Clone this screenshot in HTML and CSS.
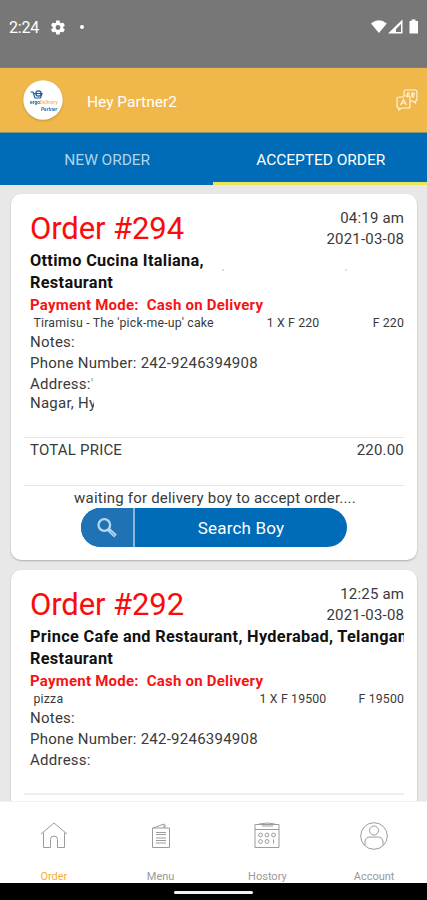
FILE: index.html
```html
<!DOCTYPE html>
<html lang="en">
<head>
<meta charset="utf-8">
<title>Accepted orders</title>
<link rel="stylesheet" href="styles.css">
</head>
<body>
<div class="phone">
  <div class="status">
    <span class="clock">2:24</span>
    <svg class="gear" viewBox="2 2 20 20"><path fill="#fff" fill-rule="evenodd" d="M19.4 13a7.600 7.600 0 0 0 0-2l2.100-1.600c.2-.2.3-.4.1-.7l-2-3.400c-.1-.2-.4-.3-.6-.2l-2.500 1a7.300 7.300 0 0 0-1.700-1l-.4-2.600c0-.3-.2-.5-.5-.5h-4c-.3 0-.5.200-.5.5L9 5.100a7.700 7.700 0 0 0-1.700 1l-2.500-1c-.2-.1-.5 0-.6.200l-2 3.400c-.1.300-.1.500.1.700L4.500 11a7.600 7.600 0 0 0 0 2l-2.200 1.600c-.2.200-.2.400-.1.700l2 3.400c.1.200.4.300.6.200l2.500-1c.5.400 1.100.8 1.700 1l.4 2.600c0 .3.200.5.500.5h4c.3 0 .5-.2.500-.5l.4-2.600c.6-.2 1.200-.6 1.700-1l2.500 1c.2.100.5 0 .6-.2l2-3.400c.2-.3.100-.5-.1-.7zM12 15.500a3.500 3.500 0 1 1 0-7 3.500 3.500 0 0 1 0 7z"/></svg>
    <i class="dot"></i>
    <svg class="signals" viewBox="0 0 50 16"><path fill="#fff" d="M1 4.500Q8.800-2 16.800 4.500L8.900 14z"/><path fill="#fff" fill-rule="evenodd" d="M32.500.5v14H18zM31 5l-5 5v3h5z"/><path fill="#fff" d="M39.500 2h2V.5h4V2h2.500v12.500h-8.500z"/></svg>
  </div>
  <header class="header">
    <svg class="avatar" viewBox="0 0 40 40"><circle cx="20" cy="20" r="19.700" fill="#fff"/><g fill="none" stroke="#1c5c9c" stroke-width="1.200"><path d="M7.500 12h2.500l2 6h5.500l1.500-4.500h-8"/><circle cx="15.500" cy="13.500" r="2.600"/></g><text x="7" y="23.500" class="logo-a">ergo</text><text x="16.500" y="23.500" class="logo-b">Delivery</text><text x="18" y="30.800" class="logo-c">Partner</text></svg>
    <span class="hello">Hey Partner2</span>
    <svg class="translate" viewBox="0 0 22 22" fill="none" stroke="#fff4dc" stroke-width="1.200"><path d="M8 7V2.800Q8 1 10 1h9q2 0 2 2v7.500q0 1.500-1.500 1.500v2L17 12h-3M8 7h4q2 0 2 2v8q0 2-2 2H5.500L3 21v-2q-2 0-2-2V9.500Q1 8 3 8h5"/><path d="M4.500 16l3-5.500 3 5.500M5.500 14h4M11.500 8.500V4H14m-2.500 2H14m2 2.500V4h2v2h-2l2 2.500"/></svg>
  </header>
  <nav class="tabs"><div class="tab">NEW ORDER</div><div class="tab on">ACCEPTED ORDER</div></nav>
  <main class="list">
    <article class="card">
      <div class="top"><h2>Order #294</h2><div class="when"><div>04:19 am</div><div>2021-03-08</div></div></div>
      <div class="name n1">Ottimo Cucina Italiana,<i class="speck s1"></i><i class="speck s2"></i></div>
      <div class="name n2">Restaurant</div>
      <div class="pay">Payment Mode:&nbsp; Cash on Delivery</div>
      <div class="item"><span class="dish">Tiramisu - The 'pick-me-up' cake</span><span class="qty">1 X F 220</span><span class="sum">F 220</span></div>
      <div class="line">Notes:</div>
      <div class="line">Phone Number: 242-9246394908</div>
      <div class="line addr">Address:<span class="tick">'</span></div>
      <div class="line city"><span class="cut">Nagar, Hy</span></div>
      <div class="total"><span>TOTAL PRICE</span><span>220.00</span></div>
      <div class="wait">waiting for delivery boy to accept order....</div>
      <div class="search"><span class="lens"><svg viewBox="0 0 22 22" fill="none" stroke="#b5d6f1"><circle cx="8.300" cy="8" r="5.800" stroke-width="2.300"/><path d="M12.500 12.500l7 6.500" stroke-width="3.800"/><path d="M14.500 14.500l4.200 4" stroke="#4e92c7" stroke-width="1"/></svg></span><span class="label">Search Boy</span></div>
    </article>
    <article class="card">
      <div class="top"><h2>Order #292</h2><div class="when"><div>12:25 am</div><div>2021-03-08</div></div></div>
      <div class="name n1">Prince Cafe and Restaurant, Hyderabad, Telangana</div>
      <div class="name n2">Restaurant</div>
      <div class="pay">Payment Mode:&nbsp; Cash on Delivery</div>
      <div class="item"><span class="dish">pizza</span><span class="qty">1 X F 19500</span><span class="sum">F 19500</span></div>
      <div class="line">Notes:</div>
      <div class="line">Phone Number: 242-9246394908</div>
      <div class="line addr">Address:</div>
      <div class="rule"></div>
    </article>
  </main>
  <nav class="bottom">
    <div class="nav on"><svg viewBox="0 0 28 28"><path d="M1 12L14 1l13 11M3.500 10.500v15h7v-8q0-3.500 3.500-3.500t3.500 3.500v8h7v-15"/></svg><span>Order</span></div>
    <div class="nav"><svg viewBox="0 0 28 28"><path d="M5.500 6h17v19.500h-17zM6 6l11-4v4M18 2.500V6M9 10.500h10M9 12.500h10M9 16h10M9 18.500h10M9 21h10"/></svg><span>Menu</span></div>
    <div class="nav"><svg viewBox="0 0 28 28"><path d="M2 2.500h24v23H2zM2 7.500h24M6 2q8-2 16 0M9 4h11"/><circle cx="7.500" cy="13" r="1.900"/><circle cx="14" cy="13" r="1.900"/><circle cx="20.500" cy="13" r="1.900"/><circle cx="7.500" cy="19.500" r="1.900"/><circle cx="14" cy="19.500" r="1.900"/><path d="M20.500 17.500v4"/></svg><span>Hostory</span></div>
    <div class="nav"><svg viewBox="0 0 28 28"><circle cx="14" cy="14" r="13.300"/><circle cx="14" cy="8.500" r="4.500"/><path d="M5 23.500V20q0-5 5-5h8q5 0 5 5v3.500"/></svg><span>Account</span></div>
  </nav>
  <div class="home"><i></i></div>
</div>
</body>
</html>
```
FILE: styles.css
```css
* { box-sizing: border-box; }
body { margin: 0; font-family: Roboto, sans-serif; color: #3a3a3a; }
.phone { width: 427px; height: 900px; display: flex; flex-direction: column; overflow: hidden; background: #e8e8e8; }
.status { height: 68px; flex: none; background: #777; display: flex; align-items: center; padding: 0 7px 13px 9px; color: #fff; border-bottom: 1px solid #8b7e66; }
.clock { font-size: 16px; width: 42px; letter-spacing: -.2px; padding-top: 1px; }
.gear { width: 14px; height: 15px; }
.dot { width: 4px; height: 4px; border-radius: 50%; background: #fff; margin-left: 15px; }
.signals { width: 50px; height: 16px; margin-left: auto; }
.header { height: 65px; flex: none; background: #f0b84b; display: flex; align-items: center; padding: 0 9px 0 23px; border-bottom: 1px solid #8a9470; color: #fff; }
.avatar { width: 40px; height: 40px; filter: drop-shadow(0 1px 1px rgba(100, 70, 10, .35)); }
.logo-a, .logo-b, .logo-c { font-size: 5px; font-weight: 700; }
.logo-a { fill: #2a69a4; }
.logo-b { fill: #f2bd78; }
.logo-c { fill: #2e72ad; font-style: italic; }
.hello { margin-left: 24px; font-size: 15.500px; padding-top: 3px; }
.translate { width: 22px; height: 22px; margin-left: auto; }
.tabs { height: 52px; flex: none; display: flex; background: #006bb6; color: #b3d3e9; font-size: 15.500px; }
.tab { flex: 1; text-align: center; line-height: 55px; padding-left: 1px; letter-spacing: -.05px; }
.tab.on { color: #fff; border-bottom: 3px solid #e6e55c; margin-left: -1px; padding-left: 2px; }
.list { flex: 1; min-height: 0; overflow: hidden; padding: 9px 10px 0 11px; display: flex; flex-direction: column; gap: 10px; }
.card { flex: none; height: 366px; background: #fff; border-radius: 10px; padding: 14px 13px 0 19px; box-shadow: 0 1px 2px rgba(0, 0, 0, .25); white-space: nowrap; }
.top { display: flex; justify-content: space-between; height: 42px; }
h2 { margin: 0; font-weight: 400; font-size: 31px; line-height: 42px; letter-spacing: -.1px; color: #f80c0c; }
.when { font-size: 15px; line-height: 21px; letter-spacing: .2px; margin-right: -.2px; text-align: right; }
.name { position: relative; font-weight: 700; font-size: 16.300px; letter-spacing: .32px; line-height: 22px; color: #111; overflow: hidden; }
.speck { position: absolute; top: 19px; width: 2px; height: 2px; background: #ddd; }
.s1 { left: 192px; }
.s2 { left: 315px; }
.pay { font-weight: 700; font-size: 15px; letter-spacing: .23px; line-height: 22px; color: #f51414; }
.item { display: flex; height: 16px; font-size: 12.300px; line-height: 15px; letter-spacing: .2px; }
.dish { width: 221px; padding-left: 3.500px; }
.qty { width: 84px; text-align: center; letter-spacing: .15px; }
.sum { flex: 1; text-align: right; letter-spacing: .15px; }
.line { font-size: 15px; line-height: 21px; letter-spacing: .25px; }
.addr { height: 20px; }
.tick { color: #aaa; }
.city { line-height: 18px; height: 43px; }
.cut { display: inline-block; width: 64px; overflow: hidden; }
.total { display: flex; justify-content: space-between; height: 49px; margin: 0 0 0 -6px; padding: 2px 0 0 6px; font-size: 15px; line-height: 21px; letter-spacing: .2px; border-top: 1px solid #e6e6e6; border-bottom: 1px solid #e6e6e6; }
.wait { height: 22px; font-size: 15px; line-height: 24px; letter-spacing: .2px; text-align: center; padding-right: 4px; }
.search { width: 266px; height: 39px; margin-left: 51px; border-radius: 20px; background: #006bb6; display: flex; overflow: hidden; color: #fff; }
.lens { width: 54px; background: #1f73b4; border-right: 2px solid #84b8df; display: flex; align-items: center; justify-content: center; }
.lens svg { width: 22px; height: 22px; }
.label { flex: 1; text-align: center; font-size: 17px; line-height: 41px; letter-spacing: .2px; }
.rule { margin: 23px 0 0 -6px; border-top: 2px solid #eee; }
.bottom { height: 82px; flex: none; display: flex; background: #fff; border-top: 1px solid #f2f2f2; font-size: 11px; color: #999; }
.nav { flex: 1; display: flex; flex-direction: column; align-items: center; justify-content: space-between; padding: 20px 0 0 1px; }
.nav svg { width: 28px; height: 28px; fill: none; stroke: #9b9b9b; stroke-width: 1; }
.nav span { line-height: 12px; }
.nav.on { color: #f0ae42; }
.home { height: 17px; flex: none; background: #000; display: flex; justify-content: center; padding-top: 8px; }
.home i { width: 79px; height: 3px; border-radius: 2px; background: #f2f2f2; }
```
